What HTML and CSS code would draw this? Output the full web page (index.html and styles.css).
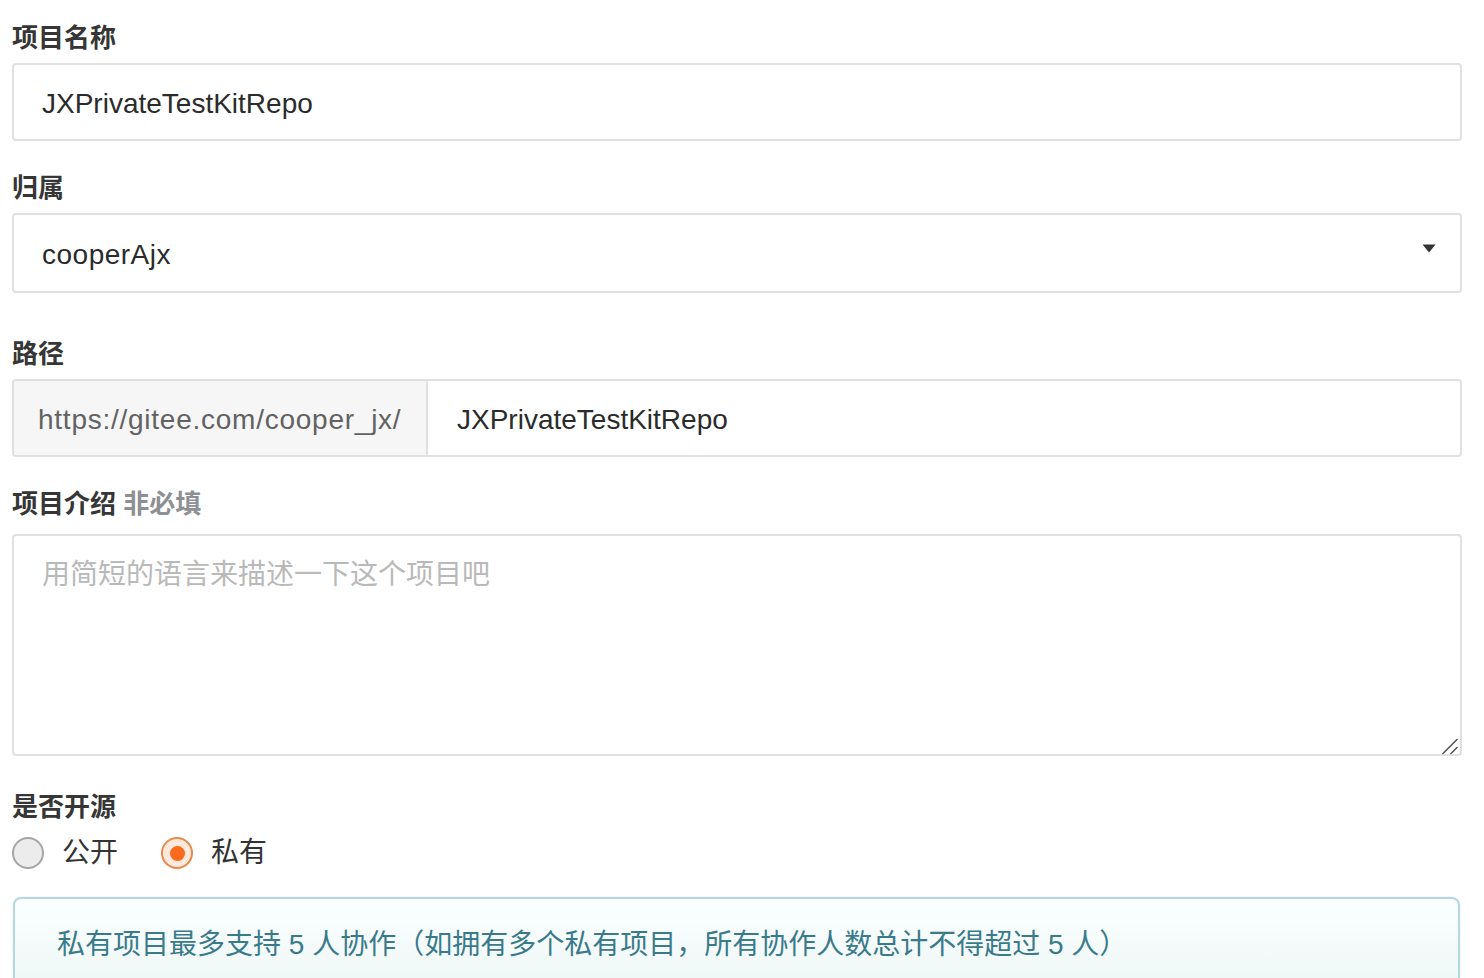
FILE: index.html
```html
<!DOCTYPE html>
<html lang="zh-CN">
<head>
<meta charset="utf-8">
<title>新建仓库</title>
<link rel="stylesheet" href="styles.css">
</head>
<body>
<form class="form">
  <div class="field">
    <label class="label">项目名称</label>
    <div class="control">JXPrivateTestKitRepo</div>
  </div>
  <div class="field field-select">
    <label class="label">归属</label>
    <div class="control select">
      <span>cooperAjx</span>
      <svg class="caret" width="14" height="9" viewBox="0 0 14 9"><path d="M0.5 0.5 H13.5 L7 8.5 Z" fill="#333"/></svg>
    </div>
  </div>
  <div class="field">
    <label class="label">路径</label>
    <div class="path">
      <div class="prefix">https://gitee.com/cooper_jx/</div>
      <div class="path-input">JXPrivateTestKitRepo</div>
    </div>
  </div>
  <div class="field field-textarea">
    <label class="label">项目介绍 <span class="optional">非必填</span></label>
    <div class="textarea-wrap">
      <textarea class="textarea" placeholder="用简短的语言来描述一下这个项目吧"></textarea>
      <svg class="grip" width="18" height="18" viewBox="0 0 18 18"><path d="M2 16.5 L16 2.5 M10 16.5 L16 10.5" stroke="#555" stroke-width="1.6" stroke-linecap="round" fill="none"/></svg>
    </div>
  </div>
  <div class="field field-radio">
    <label class="label">是否开源</label>
    <div class="radios">
      <div class="radio"><span class="circle"></span><span class="radio-text">公开</span></div>
      <div class="radio"><span class="circle checked"></span><span class="radio-text">私有</span></div>
    </div>
  </div>
  <div class="message">私有项目最多支持 5 人协作（如拥有多个私有项目，所有协作人数总计不得超过 5 人）</div>
</form>
</body>
</html>
```

FILE: styles.css
```css
* {
  box-sizing: border-box;
}

html, body {
  margin: 0;
  background: #fff;
  overflow: hidden;
}

body {
  font-family: "Liberation Sans", "Noto Sans CJK SC", sans-serif;
  color: #333;
}

.form {
  padding: 22px 22px 0 12px;
}

.field {
  margin-bottom: 31px;
}

.field-select {
  margin-bottom: 45px;
}

.field-textarea {
  margin-bottom: 35px;
}

.field-radio {
  margin-bottom: 28px;
}

.label {
  display: block;
  font-size: 26px;
  font-weight: 700;
  line-height: 32px;
  margin-bottom: 9px;
  color: #363636;
}

.field-textarea .label {
  margin-bottom: 14px;
}

.field-radio .label {
  margin-bottom: 14px;
}

.optional {
  color: #8d8f94;
}

.control {
  height: 78px;
  border: 2px solid #e0e0e0;
  border-radius: 4px;
  padding: 3px 28px 0;
  display: flex;
  align-items: center;
  font-size: 28px;
  color: #2b2b2b;
}

.select {
  height: 80px;
  justify-content: space-between;
  padding-right: 24px;
}

.select span {
  letter-spacing: 0.5px;
}

.caret {
  margin-bottom: 13px;
}

.path {
  display: flex;
  height: 78px;
  border: 2px solid #e0e0e0;
  border-radius: 4px;
  overflow: hidden;
  font-size: 28px;
}

.prefix {
  flex: 0 0 414px;
  display: flex;
  align-items: center;
  padding: 3px 0 0 24px;
  background: #f6f6f6;
  border-right: 2px solid #e0e0e0;
  color: #626262;
  letter-spacing: 0.75px;
}

.path-input {
  flex: 1;
  display: flex;
  align-items: center;
  padding: 3px 0 0 29px;
  color: #2b2b2b;
}

.textarea-wrap {
  position: relative;
}

.textarea {
  display: block;
  width: 100%;
  height: 222px;
  margin: 0;
  border: 2px solid #e0e0e0;
  border-radius: 4px;
  padding: 22px 28px;
  font-family: "Liberation Sans", "Noto Sans CJK SC", sans-serif;
  font-size: 28px;
  line-height: 34px;
  color: #2b2b2b;
  resize: none;
  outline: none;
}

.textarea::placeholder {
  color: #b9b9b9;
}

.grip {
  position: absolute;
  right: 3px;
  bottom: 1px;
}

.radios {
  display: flex;
  align-items: center;
  height: 32px;
}

.radio {
  display: flex;
  align-items: center;
  margin-right: 43px;
}

.circle {
  width: 32px;
  height: 32px;
  border-radius: 50%;
  border: 2px solid #a5a5a5;
  background: #ececec;
  margin-right: 18px;
  display: flex;
  align-items: center;
  justify-content: center;
}

.circle.checked {
  border-color: #e8884a;
  background: #fde9dc;
}

.circle.checked::after {
  content: "";
  width: 15px;
  height: 15px;
  border-radius: 50%;
  background: #fb6a1c;
}

.radio-text {
  font-size: 28px;
  line-height: 32px;
  color: #333;
}

.message {
  margin: 0 2px 0 1px;
  border: 2px solid #b4d8df;
  border-radius: 8px;
  background: linear-gradient(#fbffff, #eef6f6);
  box-shadow: 0 0 0 1px rgba(0, 0, 0, 0.03);
  padding: 26px 42px;
  font-size: 28px;
  line-height: 40px;
  color: #3a7b8b;
}
```
